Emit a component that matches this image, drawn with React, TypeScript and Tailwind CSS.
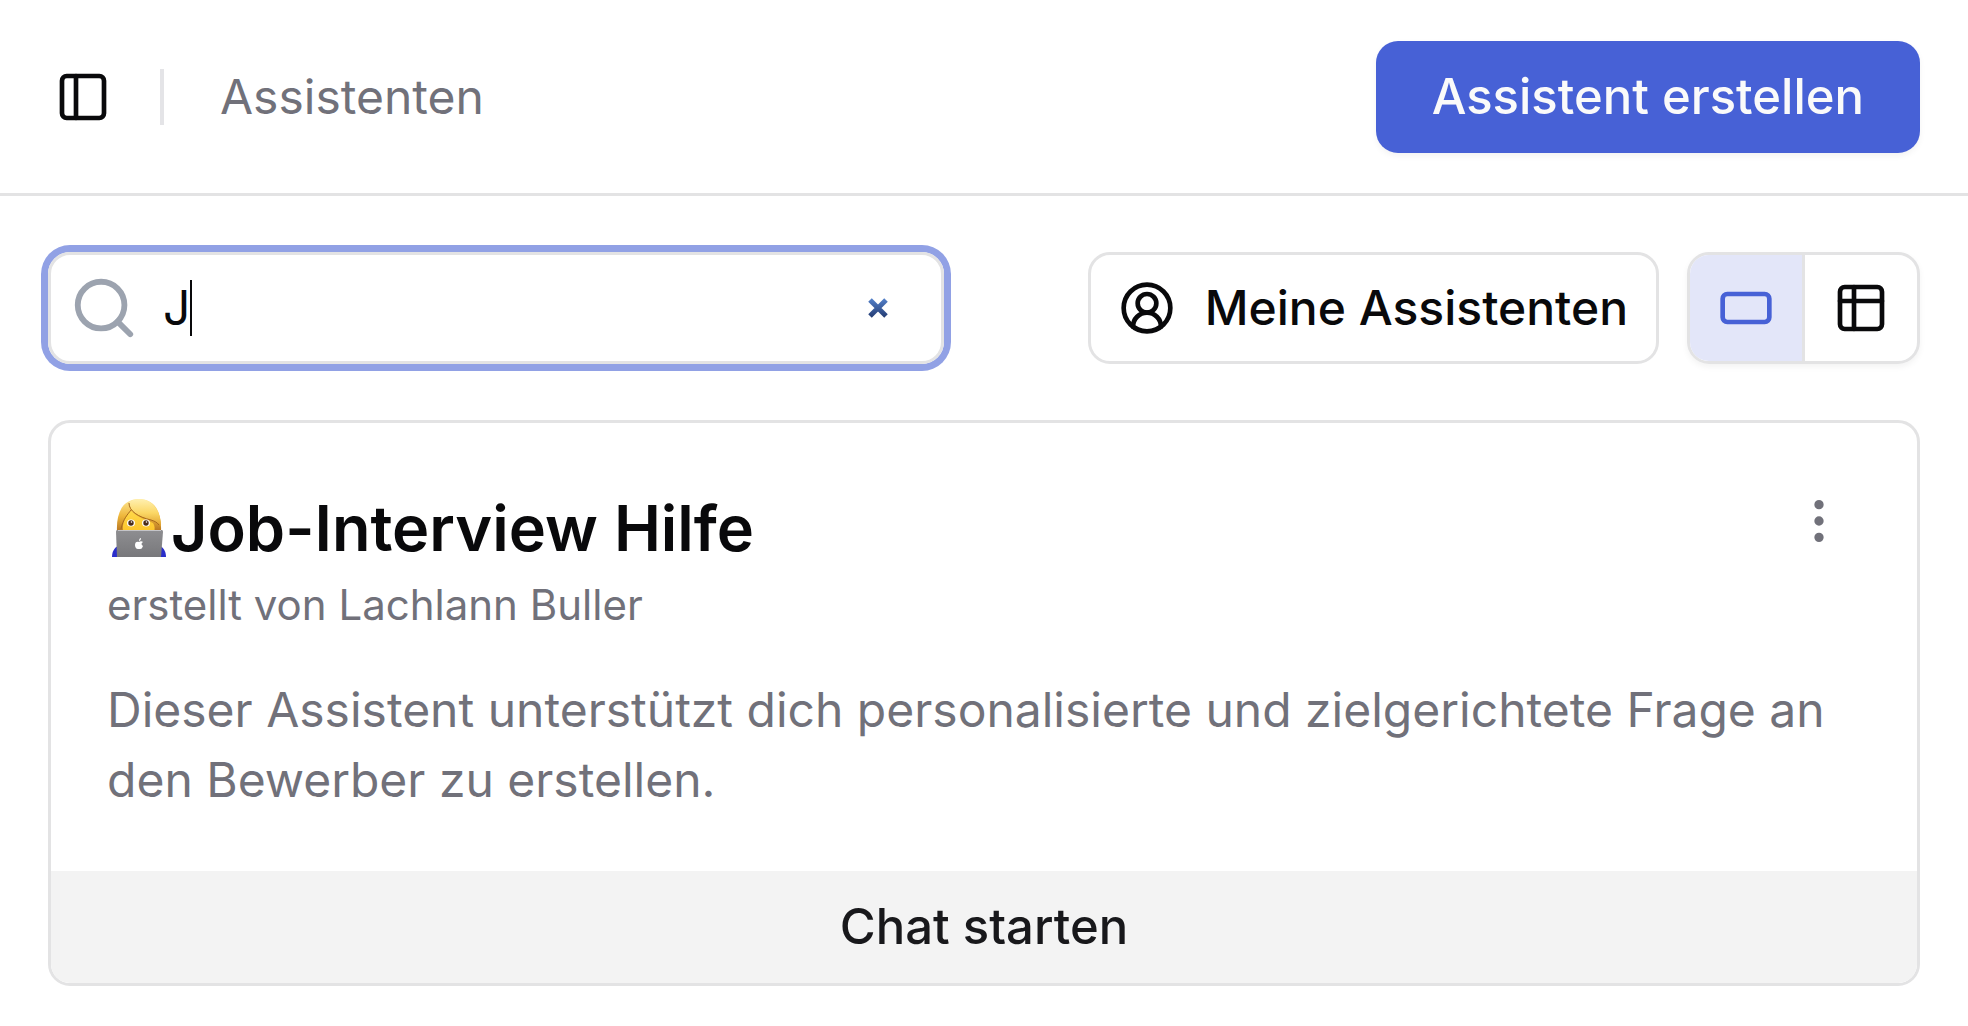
import React, { useState } from "react";
import {
  CircleUserRound,
  EllipsisVertical,
  PanelLeft,
  RectangleHorizontal,
  Search,
} from "lucide-react";

type View = "cards" | "table";

interface Assistant {
  id: number;
  name: string;
  author: string;
  description: string;
}

const assistants: Assistant[] = [
  {
    id: 1,
    name: "Job-Interview Hilfe",
    author: "Lachlann Buller",
    description:
      "Dieser Assistent unterstützt dich personalisierte und zielgerichtete Frage an den Bewerber zu erstellen.",
  },
];

// Table icon with a header row and a full-height first column
const TableIcon: React.FC = () => (
  <svg
    className="size-14"
    viewBox="0 0 24 24"
    fill="none"
    stroke="currentColor"
    strokeWidth="2"
    strokeLinecap="round"
    strokeLinejoin="round"
    aria-hidden="true"
  >
    <rect x="3" y="3" width="18" height="18" rx="2" />
    <path d="M3 9h18M9 3v18" />
  </svg>
);

// Small blue cross that empties the search field
const ClearIcon: React.FC = () => (
  <svg className="size-5" viewBox="0 0 20 20" fill="none" aria-hidden="true">
    <defs>
      <linearGradient
        id="clear-gradient"
        x1="0"
        y1="0"
        x2="0"
        y2="20"
        gradientUnits="userSpaceOnUse"
      >
        <stop stopColor="#5482cc" />
        <stop offset="1" stopColor="#233a70" />
      </linearGradient>
    </defs>
    <path
      d="M2 2l16 16M18 2L2 18"
      stroke="url(#clear-gradient)"
      strokeWidth="5"
    />
  </svg>
);

// Woman behind a laptop, used as the avatar of the assistant
const TechnologistIcon: React.FC = () => (
  <svg
    className="h-15 w-14 shrink-0"
    viewBox="0 0 56 60"
    role="img"
    aria-label="Technologin"
  >
    <defs>
      <linearGradient id="hair" x1="0" y1="0" x2="0" y2="1">
        <stop stopColor="#ffe896" />
        <stop offset="0.45" stopColor="#eeb63a" />
        <stop offset="1" stopColor="#a05a18" />
      </linearGradient>
      <linearGradient id="fringe" x1="0" y1="0" x2="0" y2="1">
        <stop stopColor="#fff0b0" />
        <stop offset="0.5" stopColor="#fbd765" />
        <stop offset="1" stopColor="#dd9c28" />
      </linearGradient>
      <linearGradient id="face" x1="0" y1="0" x2="0" y2="1">
        <stop stopColor="#ffd84a" />
        <stop offset="1" stopColor="#fcc42a" />
      </linearGradient>
      <linearGradient id="laptop" x1="0" y1="0" x2="0" y2="1">
        <stop stopColor="#8e8e91" />
        <stop offset="1" stopColor="#78787b" />
      </linearGradient>
    </defs>
    <path d="M1 59c0-5 2-9 6-11h42c4 2 6 6 6 11z" fill="#2a2ecb" />
    <path
      d="M6 34C5 14 12 1 28 1s23 13 22 33c-1 4-3 5-6 5H12c-3 0-6-1-6-5z"
      fill="url(#hair)"
    />
    <path
      d="M12 34c-1-9 2-15 8-21 6 6 15 9 22 12 2 3 2 6 1 9z"
      fill="url(#face)"
    />
    <path
      d="M18 4c0 8 8 14 22 18 4 1 8 3 10 7C50 11 40 1 28 1c-4 0-7 1-10 3z"
      fill="url(#fringe)"
    />
    <path
      d="M18 5c0 8 9 14 22 17 3 1 6 2 8 5M20 12c-3 4-8 9-10 19"
      stroke="#a7691c"
      strokeWidth="1"
      fill="none"
    />
    <ellipse cx="20" cy="25" rx="4" ry="3.5" fill="#fff" />
    <ellipse cx="35" cy="25" rx="4" ry="3.5" fill="#fff" />
    <circle cx="20" cy="25" r="2.7" fill="#4a2b18" />
    <circle cx="35" cy="25" r="2.7" fill="#4a2b18" />
    <circle cx="20.5" cy="24" r="0.8" fill="#fff" />
    <circle cx="35.5" cy="24" r="0.8" fill="#fff" />
    <path d="M5 34c0-2 1-2 2-2h43c1 0 2 0 2 2l-2 25H6z" fill="url(#laptop)" />
    <path d="M7 32.5h43" stroke="#c4c4c8" strokeWidth="1" />
    <path
      d="M28 44c-2-1-4 0-4 3 0 2 1 4 3 4h2c2 0 2-1 3-3-2-1-2-3 0-4-1-1-3-1-4 0zM28 43c0-2 1-3 2-3 0 2-1 3-2 3z"
      fill="#fff"
    />
  </svg>
);

const Header: React.FC = () => (
  <header className="flex items-center border-b-3 border-[#e3e3e4] pt-[41px] pr-12 pb-10 pl-[55px]">
    <button type="button" aria-label="Seitenleiste umschalten">
      <PanelLeft className="size-14" />
    </button>
    <div className="mr-14 ml-[49px] h-14 w-1 bg-[#e4e4e7]" />
    <h1 className="text-[48px] leading-14 text-[#71717a]">Assistenten</h1>
    <button
      type="button"
      className="ml-auto h-28 rounded-[22px] bg-[#4761d6] px-14 text-[49px] font-medium text-[#fafafa] shadow-[0_3px_6px_rgba(0,0,0,0.05)]"
    >
      Assistent erstellen
    </button>
  </header>
);

const SearchField: React.FC = () => {
  const [query, setQuery] = useState("J");

  return (
    <div className="relative flex h-28 w-full max-w-4xl items-center rounded-[22px] border-3 border-[#e3e3e4] pr-[53px] pl-[18px] ring-7 ring-[#91a1e5]">
      <Search className="size-[70px] shrink-0 text-[#9ca3af]" />
      <div className="relative ml-6 flex min-w-0 flex-1 items-center">
        <input
          type="text"
          aria-label="Assistenten suchen"
          className="w-full bg-transparent text-[48px] leading-14 caret-transparent outline-none"
          value={query}
          onChange={(e) => setQuery(e.target.value)}
        />
        {/* Caret sits right behind the typed text */}
        <div className="pointer-events-none absolute inset-y-0 left-0 flex items-center text-[48px]">
          <span className="invisible whitespace-pre">{query}</span>
          <span className="h-14 w-0.5 bg-[#09090b]" />
        </div>
      </div>
      <button
        type="button"
        aria-label="Suche leeren"
        onClick={() => setQuery("")}
      >
        <ClearIcon />
      </button>
    </div>
  );
};

const Toolbar: React.FC = () => {
  const [view, setView] = useState<View>("cards");

  return (
    <div className="flex items-center justify-between gap-28">
      <SearchField />
      <div className="flex shrink-0 items-center gap-7">
        <button
          type="button"
          className="flex h-28 items-center gap-[30px] rounded-[22px] border-3 border-[#e3e3e4] px-7 text-[48px] font-medium"
        >
          <CircleUserRound className="size-14" />
          Meine Assistenten
        </button>
        <div className="flex h-28 overflow-hidden rounded-[22px] border-3 border-[#e3e3e4] shadow-[0_3px_6px_rgba(0,0,0,0.05)]">
          <button
            type="button"
            aria-label="Kartenansicht"
            aria-pressed={view === "cards"}
            onClick={() => setView("cards")}
            className={`flex w-28 items-center justify-center ${
              view === "cards" ? "bg-[#e3e6f9] text-[#4761d6]" : ""
            }`}
          >
            <RectangleHorizontal className="size-14" />
          </button>
          <button
            type="button"
            aria-label="Tabellenansicht"
            aria-pressed={view === "table"}
            onClick={() => setView("table")}
            className={`flex w-[115px] items-center justify-center border-l-3 border-[#e3e3e4] ${
              view === "table" ? "bg-[#e3e6f9] text-[#4761d6]" : ""
            }`}
          >
            <TableIcon />
          </button>
        </div>
      </div>
    </div>
  );
};

const AssistantCard: React.FC<{ assistant: Assistant }> = ({ assistant }) => (
  <article className="overflow-hidden rounded-[22px] border-3 border-[#e3e3e4]">
    <div className="px-14 pt-[70px] pb-14">
      <div className="flex items-start justify-between">
        <div>
          <h2 className="flex items-center gap-1 pl-1 text-[63px] leading-[70px] font-semibold">
            <TechnologistIcon />
            {assistant.name}
          </h2>
          <p className="mt-3.5 text-[42px] leading-14 text-[#71717a]">
            erstellt von {assistant.author}
          </p>
        </div>
        <button
          type="button"
          aria-label="Weitere Optionen"
          className="mr-[14px] text-[#71717a]"
        >
          <EllipsisVertical className="size-14" />
        </button>
      </div>
      <p className="mt-[42px] text-[48px] leading-[70px] text-[#71717a]">
        {assistant.description}
      </p>
    </div>
    <button
      type="button"
      className="h-28 w-full bg-[#f3f3f3] text-[49px] font-medium text-[#18181b]"
    >
      Chat starten
    </button>
  </article>
);

const App: React.FC = () => (
  <div className="min-h-screen bg-white font-['Inter','Liberation_Sans',sans-serif] text-[#09090b]">
    <Header />
    <main className="flex flex-col gap-14 px-12 py-14">
      <Toolbar />
      {assistants.map((assistant) => (
        <AssistantCard key={assistant.id} assistant={assistant} />
      ))}
    </main>
  </div>
);

export default App;
